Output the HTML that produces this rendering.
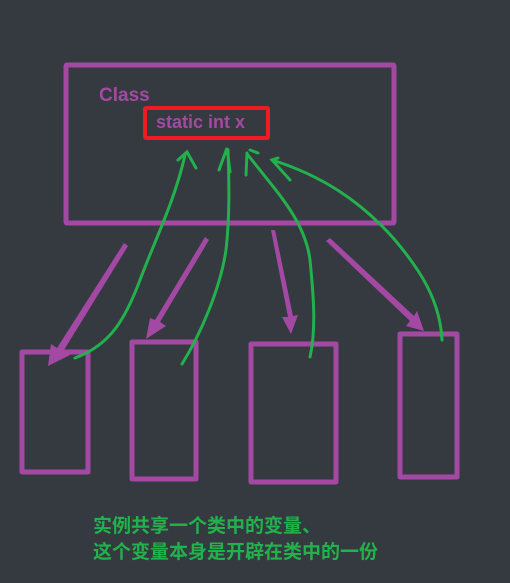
<!DOCTYPE html>
<html><head><meta charset="utf-8"><style>
html,body{margin:0;padding:0;background:#343a3f;width:510px;height:583px;overflow:hidden}
svg{display:block}
</style></head><body>
<svg width="510" height="583" viewBox="0 0 510 583" xmlns="http://www.w3.org/2000/svg">
<rect width="510" height="583" fill="#343a3f"/>
<g fill="none" stroke="#a349a4" stroke-width="5" stroke-linejoin="round">
<rect x="66" y="65" width="328" height="158" rx="1"/>
<rect x="22" y="352" width="66" height="120"/>
<rect x="132" y="342" width="64" height="137"/>
<rect x="251" y="344" width="85" height="138"/>
<rect x="400" y="334" width="57" height="143"/>
</g>
<rect x="145" y="108" width="123" height="30" fill="none" stroke="#ed1c24" stroke-width="4" rx="1"/>
<text x="99" y="101" fill="#a349a4" font-family="Liberation Sans, sans-serif" font-weight="bold" font-size="19">Class</text>
<text x="156" y="128" fill="#a349a4" font-family="Liberation Sans, sans-serif" font-weight="bold" font-size="18">static int x</text>
<g fill="#a349a4">
<polygon points="124,243 128,246 64,350 70,355 48,366 51,344 57,348"/>
<polygon points="205,237 209,240 160,322 166,326 146,339 150,318 155,320"/>
<polygon points="271,230 275,230 293,316 298,315 291,334 282,317 288,317"/>
<polygon points="326,241 330,238 414,316 417,311 424,331 406,326 410,321"/>
</g>
<g fill="none" stroke="#22b14c" stroke-width="3" stroke-linecap="round">
<path d="M75,358 C110,345 125,320 140,280 C155,240 175,200 185,155"/>
<path d="M178,160 L187,152 L196,168"/>
<path d="M182,364 C200,335 220,290 226,250 C230,215 229,180 228,150"/>
<path d="M219,170 L227,148 L230,172"/>
<path d="M310,357 C316,330 314,300 310,260 C305,220 275,190 248,155"/>
<path d="M246,175 L247,153"/><path d="M250,150 L258,153"/>
<path d="M442,340 C440,300 420,270 395,240 C360,200 320,175 272,160"/>
<path d="M290,180 L272,160 L278,158"/>
</g>
<g font-family="Liberation Sans, 'Noto Sans CJK SC', sans-serif" font-weight="bold" font-size="19" fill="#22b14c">
<text x="93" y="532">实例共享一个类中的变量、</text>
<text x="93" y="558">这个变量本身是开辟在类中的一份</text>
</g>
</svg>
</body></html>
